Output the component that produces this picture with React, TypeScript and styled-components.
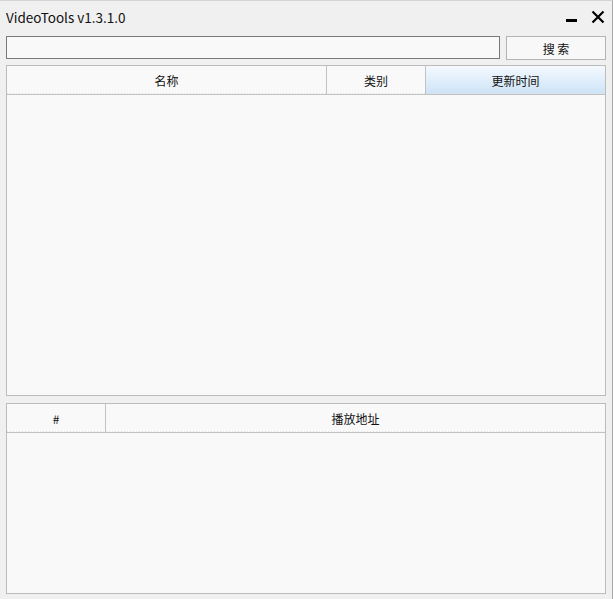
import styled, { createGlobalStyle } from "styled-components";

const GlobalStyle = createGlobalStyle`
  html, body {
    margin: 0;
    padding: 0;
    background: #f0f0f0;
  }
  body {
    font-family: "Noto Sans CJK SC", "Noto Sans", sans-serif;
  }
`;

const App = () => {
  return (
    <>
      <GlobalStyle />
      <Window>
        <TitleBar>
          <Title>VideoTools v1.3.1.0</Title>
          <Controls>
            <ControlButton aria-label="minimize">
              <svg width="12" height="12" viewBox="0 0 12 12">
                <rect x="0" y="8" width="11" height="3" fill="#000" />
              </svg>
            </ControlButton>
            <ControlButton aria-label="close">
              <svg width="14" height="14" viewBox="0 0 14 14">
                <path d="M1.5 1.5 L12.5 12.5 M12.5 1.5 L1.5 12.5" stroke="#000" strokeWidth="2.2" />
              </svg>
            </ControlButton>
          </Controls>
        </TitleBar>

        <SearchRow>
          <SearchInput />
          <SearchButton>搜 索</SearchButton>
        </SearchRow>

        <Grid $height={331}>
          <HeaderRow>
            <HeaderCell $width={319}>名称</HeaderCell>
            <HeaderCell $width={98}>类别</HeaderCell>
            <HeaderCell $active>更新时间</HeaderCell>
          </HeaderRow>
        </Grid>

        <Grid $height={191}>
          <HeaderRow>
            <HeaderCell $width={98}>#</HeaderCell>
            <HeaderCell>播放地址</HeaderCell>
          </HeaderRow>
        </Grid>
      </Window>
    </>
  );
};

export default App;

const Window = styled.div`
  width: 613px;
  height: 599px;
  box-sizing: border-box;
  border-top: 1px solid #d4d4d4;
  border-right: 1px solid #a9a9a9;
  padding: 0 6px 0 6px;
  display: flex;
  flex-direction: column;
  background: #f0f0f0;
  overflow: hidden;
`;

const TitleBar = styled.div`
  height: 35px;
  flex-shrink: 0;
  display: flex;
  align-items: center;
  justify-content: space-between;
`;

const Title = styled.div`
  font-family: "Noto Sans CJK SC", "Noto Sans", sans-serif;
  font-size: 13.5px;
  color: #111;
  margin-top: -4px;
`;

const Controls = styled.div`
  display: flex;
  align-items: center;
  gap: 13px;
  margin-top: -4px;
  margin-right: 1px;
`;

const ControlButton = styled.div`
  display: flex;
  align-items: center;
  justify-content: center;
`;

const SearchRow = styled.div`
  display: flex;
  flex-shrink: 0;
  gap: 6px;
  height: 24px;
  margin-bottom: 5px;
`;

const SearchInput = styled.div`
  width: 494px;
  height: 23px;
  box-sizing: border-box;
  border: 1px solid #7a7a7a;
  background: #f9f9f9;
`;

const SearchButton = styled.div`
  flex: 1;
  height: 24px;
  box-sizing: border-box;
  border: 1px solid #b4b4b4;
  background: #f8f8f8;
  display: flex;
  align-items: center;
  justify-content: center;
  font-size: 12px;
  color: #111;
`;

const Grid = styled.div<{ $height: number }>`
  height: ${(p) => p.$height}px;
  flex-shrink: 0;
  box-sizing: border-box;
  border: 1px solid #bcbcbc;
  background: #f9f9f9;
  margin-bottom: 7px;
`;

const HeaderRow = styled.div`
  display: flex;
  height: 29px;
  box-sizing: border-box;
  border-bottom: 1px solid #c2c2c2;
  position: relative;
  &::after {
    content: "";
    position: absolute;
    left: 0;
    right: 0;
    bottom: 0;
    height: 1px;
    background-image: linear-gradient(to right, #e4e4e4 50%, transparent 50%);
    background-size: 3px 1px;
  }
`;

const HeaderCell = styled.div<{ $width?: number; $active?: boolean }>`
  ${(p) => (p.$width ? `width: ${p.$width}px;` : "flex: 1;")}
  flex-shrink: 0;
  display: flex;
  align-items: center;
  justify-content: center;
  font-size: 12px;
  color: #111;
  border-right: 1px solid #c2c2c2;
  background: ${(p) =>
    p.$active ? "linear-gradient(to bottom, #f4f9fe, #cde3f7)" : "#f9f9f9"};
  &:last-child {
    border-right: none;
  }
`;
